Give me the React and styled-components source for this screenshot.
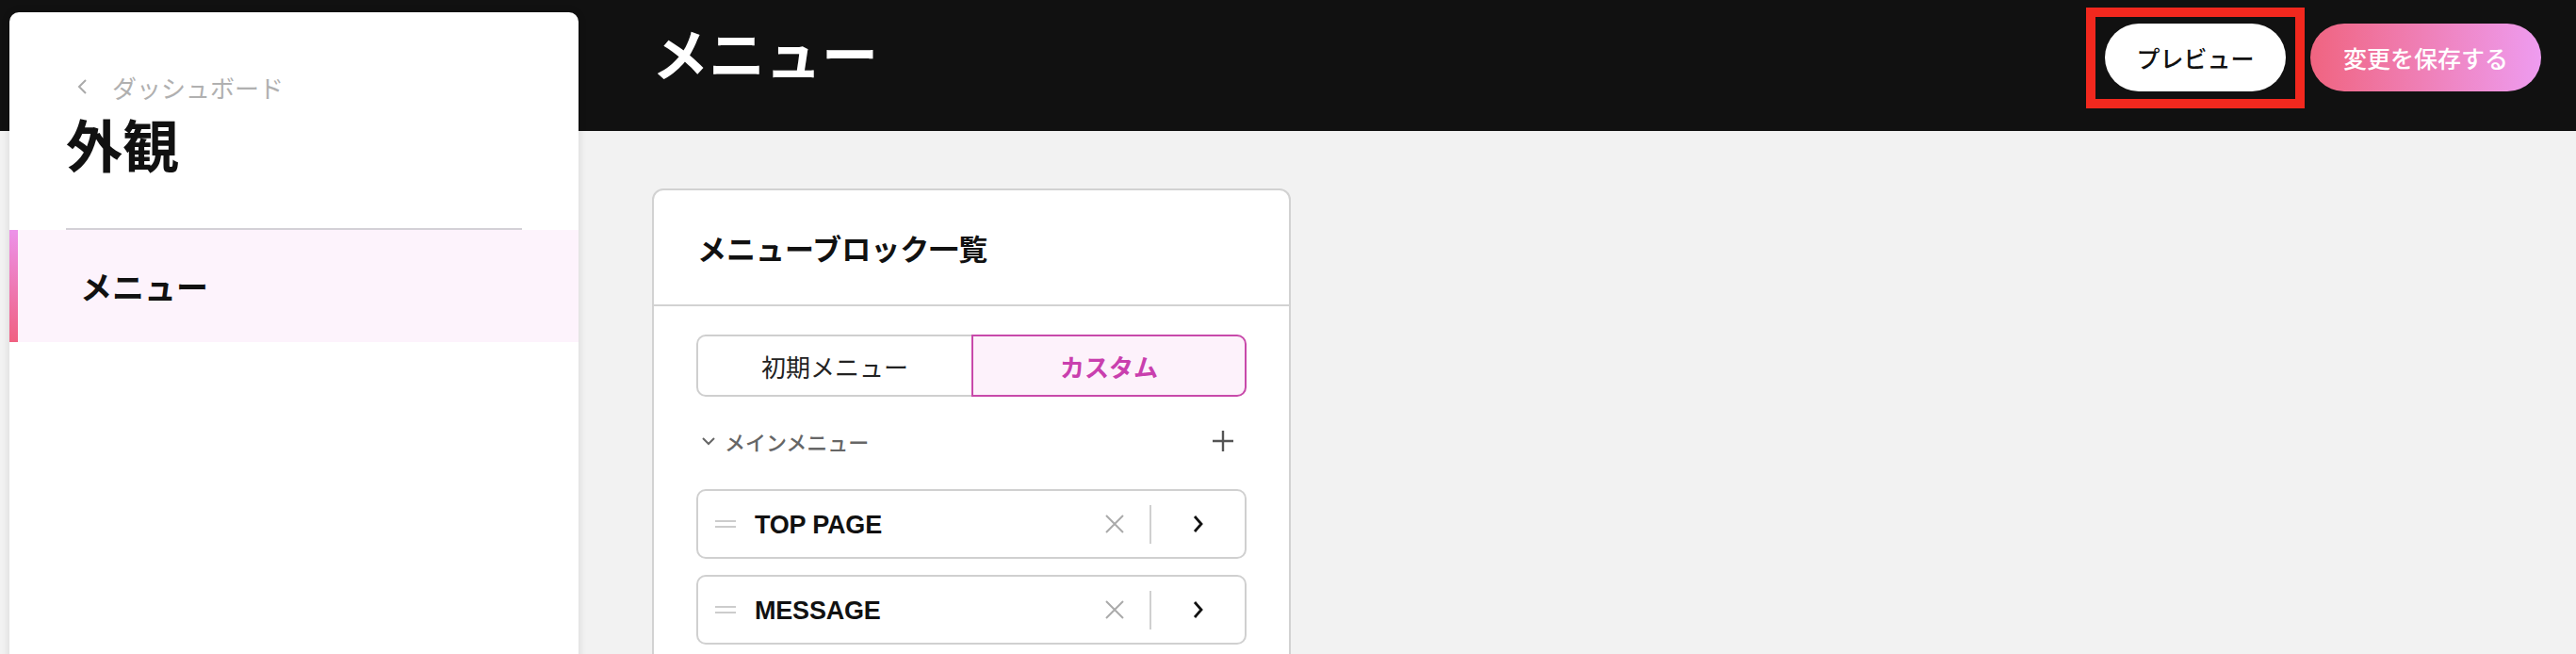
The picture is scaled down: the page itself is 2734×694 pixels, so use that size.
import React from "react";
import styled, { createGlobalStyle } from "styled-components";

const GlobalStyle = createGlobalStyle`
  * {
    box-sizing: border-box;
  }

  body {
    margin: 0;
    font-family: "Liberation Sans", "Noto Sans CJK JP", sans-serif;
    color: #111;
    background: #f2f2f2;
  }
`;

const menuItems = ["TOP PAGE", "MESSAGE"];

const ChevronLeft = () => (
  <svg width="17" height="20" viewBox="0 0 17 20" fill="none">
    <polyline points="12,3 5,10 12,17" stroke="#aaa" strokeWidth="2" />
  </svg>
);

const ChevronDown = () => (
  <svg width="16" height="12" viewBox="0 0 16 12" fill="none">
    <polyline points="2,3 8,9 14,3" stroke="#666" strokeWidth="2" />
  </svg>
);

const PlusIcon = () => (
  <svg width="26" height="26" viewBox="0 0 26 26" fill="none">
    <path d="M13 2v22M2 13h22" stroke="#555" strokeWidth="2.4" />
  </svg>
);

const HandleIcon = () => (
  <svg width="22" height="10" viewBox="0 0 22 10" fill="none">
    <path d="M0 2h22M0 8h22" stroke="#ccc" strokeWidth="2" />
  </svg>
);

const CloseIcon = () => (
  <svg width="20" height="20" viewBox="0 0 20 20" fill="none">
    <path d="M1 1l18 18M19 1L1 19" stroke="#aaa" strokeWidth="2" />
  </svg>
);

const ChevronRight = () => (
  <svg width="14" height="20" viewBox="0 0 14 20" fill="none">
    <polyline points="3,2 10,10 3,18" stroke="#111" strokeWidth="2.8" />
  </svg>
);

const App = () => {
  return (
    <Page>
      <GlobalStyle />
      <Sidebar>
        <SidebarHead>
          <Breadcrumb>
            <ChevronLeft />
            <span>ダッシュボード</span>
          </Breadcrumb>
          <SidebarTitle>外観</SidebarTitle>
        </SidebarHead>
        <NavItem active>メニュー</NavItem>
      </Sidebar>

      <Main>
        <Topbar>
          <PageTitle>メニュー</PageTitle>
          <Actions>
            <Highlight>
              <PreviewButton>プレビュー</PreviewButton>
            </Highlight>
            <SaveButton>変更を保存する</SaveButton>
          </Actions>
        </Topbar>

        <Content>
          <Card>
            <CardHead>メニューブロック一覧</CardHead>
            <CardBody>
              <Segmented>
                <Segment>初期メニュー</Segment>
                <Segment selected>カスタム</Segment>
              </Segmented>

              <SectionRow>
                <SectionLabel>
                  <ChevronDown />
                  メインメニュー
                </SectionLabel>
                <PlusIcon />
              </SectionRow>

              <ItemList>
                {menuItems.map((item) => (
                  <Item key={item}>
                    <Handle>
                      <HandleIcon />
                    </Handle>
                    <ItemLabel>{item}</ItemLabel>
                    <RemoveButton>
                      <CloseIcon />
                    </RemoveButton>
                    <NextButton>
                      <ChevronRight />
                    </NextButton>
                  </Item>
                ))}
              </ItemList>
            </CardBody>
          </Card>
        </Content>
      </Main>
    </Page>
  );
};

const Page = styled.div`
  display: flex;
  min-height: 100vh;
  background: linear-gradient(#111 0, #111 139px, #f2f2f2 139px);
  overflow: hidden;
`;

const Sidebar = styled.aside`
  flex: 0 0 604px;
  margin: 13px 0 0 10px;
  min-height: calc(100vh - 13px);
  background: #fff;
  border-radius: 10px 10px 0 0;
  box-shadow: 0 0 10px rgba(0, 0, 0, 0.12);
`;

const SidebarHead = styled.div`
  margin: 0 60px;
  padding-top: 64px;
  padding-bottom: 48px;
  border-bottom: 2px solid #d3d0d6;
`;

const Breadcrumb = styled.div`
  display: flex;
  align-items: center;
  gap: 23px;
  height: 30px;
  padding-left: 9px;
  font-size: 26px;
  font-weight: 400;
  color: #b0b0b0;
`;

const SidebarTitle = styled.h1`
  margin: 15px 0 0;
  font-size: 60px;
  line-height: 72px;
  font-weight: 700;
  color: #111;
`;

const NavItem = styled.div`
  display: flex;
  align-items: center;
  height: 119px;
  padding-left: 66px;
  font-size: 34px;
  font-weight: 700;
  color: #111;
  background: ${(p) => (p.active ? "#fdf3fc" : "transparent")};
  border-left: 9px solid transparent;
  border-image: ${(p) =>
    p.active ? "linear-gradient(#ec92ea, #f06080) 1" : "none"};
`;

const Main = styled.main`
  flex: 1;
  display: flex;
  flex-direction: column;
`;

const Topbar = styled.header`
  height: 139px;
  display: flex;
  align-items: center;
  justify-content: space-between;
  padding: 0 37px 17px 78px;
`;

const PageTitle = styled.h2`
  margin: 0;
  font-size: 60px;
  font-weight: 700;
  color: #fff;
  line-height: 1;
`;

const Actions = styled.div`
  display: flex;
  align-items: center;
  gap: 6px;
`;

const Highlight = styled.div`
  border: 10px solid #f2281e;
  padding: 7px 10px 8px;
`;

const PillButton = styled.button`
  height: 72px;
  border: none;
  border-radius: 36px;
  font-family: inherit;
  font-size: 25px;
  font-weight: 500;
  cursor: pointer;
`;

const PreviewButton = styled(PillButton)`
  width: 192px;
  background: #fff;
  color: #111;
`;

const SaveButton = styled(PillButton)`
  width: 245px;
  background: linear-gradient(90deg, #f06480, #ee9cf0);
  color: #fff;
`;

const Content = styled.div`
  padding: 61px 0 0 78px;
`;

const Card = styled.section`
  width: 678px;
  background: #fff;
  border: 2px solid #d2d2d2;
  border-radius: 12px;
`;

const CardHead = styled.div`
  height: 123px;
  display: flex;
  align-items: center;
  padding-left: 46px;
  font-size: 31px;
  font-weight: 700;
  border-bottom: 2px solid #d2d2d2;
`;

const CardBody = styled.div`
  padding: 30px 45px 120px;
`;

const Segmented = styled.div`
  display: grid;
  grid-template-columns: 1fr 1fr;
  height: 66px;
`;

const Segment = styled.div`
  display: flex;
  align-items: center;
  justify-content: center;
  font-size: 26px;
  font-weight: ${(p) => (p.selected ? 700 : 400)};
  color: ${(p) => (p.selected ? "#c93fae" : "#222")};
  background: ${(p) => (p.selected ? "#fdf2fb" : "#fff")};
  border: 2px solid ${(p) => (p.selected ? "#c84aaa" : "#cfcfcf")};
  border-right: ${(p) => (p.selected ? "2px solid #c84aaa" : "none")};
  border-radius: ${(p) => (p.selected ? "0 10px 10px 0" : "10px 0 0 10px")};
`;

const SectionRow = styled.div`
  display: flex;
  align-items: center;
  justify-content: space-between;
  height: 40px;
  margin-top: 27px;
  padding: 0 12px 0 5px;
`;

const SectionLabel = styled.div`
  display: flex;
  align-items: center;
  gap: 9px;
  font-size: 22px;
  font-weight: 500;
  color: #666;
`;

const ItemList = styled.div`
  display: flex;
  flex-direction: column;
  gap: 17px;
  margin-top: 31px;
`;

const Item = styled.div`
  display: flex;
  align-items: center;
  height: 74px;
  border: 2px solid #d0d0d0;
  border-radius: 10px;
  padding-left: 18px;
`;

const Handle = styled.div`
  display: flex;
  width: 42px;
`;

const ItemLabel = styled.div`
  flex: 1;
  padding-top: 3px;
  font-size: 27px;
  font-weight: 700;
  color: #111;
  letter-spacing: -0.2px;
`;

const RemoveButton = styled.div`
  display: flex;
  align-items: center;
  justify-content: center;
  width: 74px;
`;

const NextButton = styled.div`
  display: flex;
  align-items: center;
  justify-content: center;
  width: 101px;
  height: 41px;
  border-left: 2px solid #d0d0d0;
`;

export default App;
